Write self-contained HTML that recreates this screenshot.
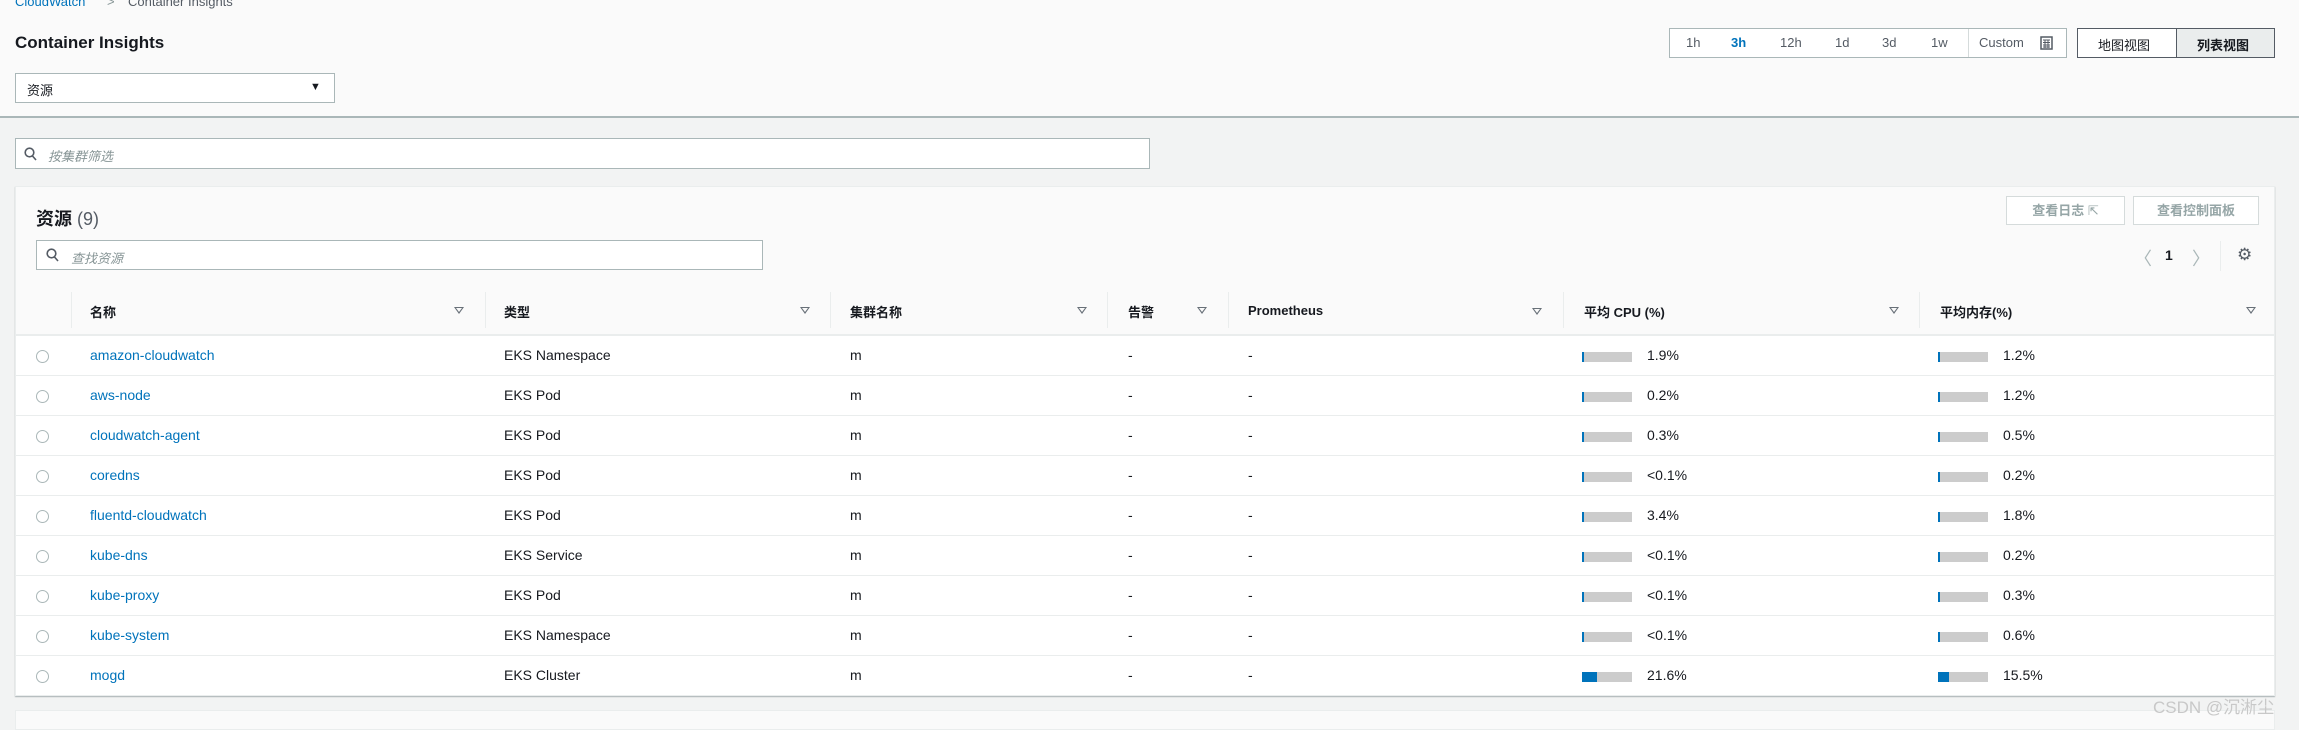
<!DOCTYPE html>
<html><head><meta charset="utf-8"><style>
*{box-sizing:border-box;margin:0;padding:0}
body{width:2299px;height:722px;overflow:hidden;background:#f2f3f3;font-family:"Liberation Sans","Noto Sans CJK SC",sans-serif;font-size:14px;color:#16191f;position:relative}
.a{position:absolute;white-space:nowrap}
.top{position:absolute;left:0;top:0;width:2299px;height:118px;background:#fafafa;border-bottom:2px solid #aab7b8}
.inp{position:absolute;background:#fff;border:1px solid #aab7b8}
.ph{color:#879596;font-style:italic}
.panel{position:absolute;left:15px;top:186px;width:2260px;height:510px;background:#fff;border:1px solid #eaeded;box-shadow:0 1px 1px rgba(0,28,36,.3)}
.phead{position:absolute;left:0;top:0;width:100%;height:148px;background:#fafafa;border-bottom:1px solid #eaeded}
.row{position:absolute;left:0;width:100%;height:40px;border-top:1px solid #eaeded}
.rad{position:absolute;width:13px;height:13px;border:1px solid #aab7b8;border-radius:50%}
.lnk{color:#0073bb}
.bar{position:absolute;width:50px;height:10px;background:#cccccc}
.bar i{position:absolute;left:0;top:0;height:10px;background:#0073bb}
.tri{position:absolute;width:0;height:0;border-left:5px solid transparent;border-right:5px solid transparent;border-top:7px solid #687078}
.tri::after{content:"";position:absolute;left:-3px;top:-6px;border-left:3px solid transparent;border-right:3px solid transparent;border-top:4px solid #fafafa}
.div{position:absolute;width:1px;background:#eaeded}
.btn{position:absolute;border:1px solid #d5dbdb;background:#fff;color:#95a5a6;font-weight:bold;font-size:13px;text-align:center;line-height:27px}
</style></head><body>
<div class="top"></div>
<div class="a lnk" style="left:15px;top:-6px;font-size:13px">CloudWatch</div>
<div class="a" style="left:107px;top:-6px;font-size:13px;color:#879596">&gt;</div>
<div class="a" style="left:128px;top:-6px;font-size:13px;color:#545b64">Container Insights</div>
<div class="a" style="left:15px;top:33px;font-size:17px;font-weight:bold">Container Insights</div>
<div class="inp" style="left:15px;top:73px;width:320px;height:30px"><span class="a" style="left:11px;top:6px;font-size:13px">资源</span><span class="a" style="left:294px;top:7px;font-size:11px;color:#16191f">▼</span></div>

<div class="inp" style="left:1669px;top:28px;width:398px;height:30px;border-color:#aab7b8"></div>
<div class="a" style="left:1686px;top:35px;font-size:13px;color:#545b64">1h</div>
<div class="a" style="left:1731px;top:35px;font-size:13px;color:#0073bb;font-weight:bold">3h</div>
<div class="a" style="left:1780px;top:35px;font-size:13px;color:#545b64">12h</div>
<div class="a" style="left:1835px;top:35px;font-size:13px;color:#545b64">1d</div>
<div class="a" style="left:1882px;top:35px;font-size:13px;color:#545b64">3d</div>
<div class="a" style="left:1931px;top:35px;font-size:13px;color:#545b64">1w</div>
<div class="div" style="left:1968px;top:29px;height:28px;background:#d5dbdb"></div>
<div class="a" style="left:1979px;top:35px;font-size:13px;color:#545b64">Custom</div>
<svg class="a" style="left:2040px;top:36px" width="13" height="14" viewBox="0 0 13 14"><rect x="1" y="1" width="11" height="12" fill="none" stroke="#545b64" stroke-width="1.5"/><path d="M3 4h7M3 6.5h7M3 9h7M3 11h7M5 4v8M8 4v8" stroke="#545b64" stroke-width="1"/></svg>
<div class="a" style="left:2077px;top:28px;width:198px;height:30px;border:1px solid #545b64;background:#fff"></div>
<div class="a" style="left:2176px;top:29px;width:98px;height:28px;background:#eaeded;border-left:1px solid #545b64"></div>
<div class="a" style="left:2098px;top:35px;font-size:13px">地图视图</div>
<div class="a" style="left:2197px;top:35px;font-size:13px;font-weight:bold">列表视图</div>

<div class="inp" style="left:15px;top:138px;width:1135px;height:31px"><svg class="a" style="left:8px;top:8px" width="13" height="14"><circle cx="5.5" cy="5.5" r="4.3" fill="none" stroke="#545b64" stroke-width="1.6"/><path d="M8.5 9l3.5 4" stroke="#545b64" stroke-width="1.6"/></svg><span class="a ph" style="left:32px;top:7px;font-size:13px">按集群筛选</span></div>

<div class="panel">
<div class="phead"></div>
<div class="a" style="left:20px;top:18px;font-size:18px;font-weight:bold">资源 <span style="font-weight:normal;color:#545b64">(9)</span></div>
<div class="inp" style="left:20px;top:53px;width:727px;height:30px"><svg class="a" style="left:9px;top:7px" width="13" height="14"><circle cx="5.5" cy="5.5" r="4.3" fill="none" stroke="#545b64" stroke-width="1.6"/><path d="M8.5 9l3.5 4" stroke="#545b64" stroke-width="1.6"/></svg><span class="a ph" style="left:34px;top:7px;font-size:13px">查找资源</span></div>
<div class="btn" style="left:1990px;top:9px;width:119px;height:29px">查看日志 <span style="font-weight:normal">⇱</span></div>
<div class="btn" style="left:2117px;top:9px;width:126px;height:29px">查看控制面板</div>
<div class="a" style="left:2118px;top:58px;font-size:18px;color:#aab7b8">〈</div>
<div class="a" style="left:2149px;top:60px;font-size:14px;font-weight:bold">1</div>
<div class="a" style="left:2176px;top:58px;font-size:18px;color:#aab7b8">〉</div>
<div class="div" style="left:2204px;top:54px;height:30px"></div>
<div class="a" style="left:2221px;top:58px;font-size:17px;color:#545b64">⚙</div>

<div class="div" style="left:55px;top:105px;height:36px"></div>
<div class="div" style="left:469px;top:105px;height:36px"></div>
<div class="div" style="left:814px;top:105px;height:36px"></div>
<div class="div" style="left:1091px;top:105px;height:36px"></div>
<div class="div" style="left:1212px;top:105px;height:36px"></div>
<div class="div" style="left:1547px;top:105px;height:36px"></div>
<div class="div" style="left:1903px;top:105px;height:36px"></div>
<div class="a" style="left:74px;top:115px;font-weight:bold;font-size:13px">名称</div>
<div class="a" style="left:488px;top:115px;font-weight:bold;font-size:13px">类型</div>
<div class="a" style="left:834px;top:115px;font-weight:bold;font-size:13px">集群名称</div>
<div class="a" style="left:1112px;top:115px;font-weight:bold;font-size:13px">告警</div>
<div class="a" style="left:1232px;top:116px;font-weight:bold;font-size:13px">Prometheus</div>
<div class="a" style="left:1568px;top:115px;font-weight:bold;font-size:13px">平均 CPU (%)</div>
<div class="a" style="left:1924px;top:115px;font-weight:bold;font-size:13px">平均内存(%)</div>
<div class="tri" style="left:438px;top:120px"></div>
<div class="tri" style="left:784px;top:120px"></div>
<div class="tri" style="left:1061px;top:120px"></div>
<div class="tri" style="left:1181px;top:120px"></div>
<div class="tri" style="left:1516px;top:121px"></div>
<div class="tri" style="left:1873px;top:120px"></div>
<div class="tri" style="left:2230px;top:120px"></div>

<div id="rows"></div>
</div>
<div class="a" style="left:15px;top:710px;width:2260px;height:20px;background:#fafafa;border:1px solid #eaeded"></div>
<div class="a" style="left:2153px;top:693px;font-size:17px;color:#c8c8c8">CSDN @沉淅尘</div>
<script>
var d=[["amazon-cloudwatch","EKS Namespace",1.9,"1.9%",1.2,"1.2%"],["aws-node","EKS Pod",0.2,"0.2%",1.2,"1.2%"],["cloudwatch-agent","EKS Pod",0.3,"0.3%",0.5,"0.5%"],["coredns","EKS Pod",0.1,"<0.1%",0.2,"0.2%"],["fluentd-cloudwatch","EKS Pod",3.4,"3.4%",1.8,"1.8%"],["kube-dns","EKS Service",0.1,"<0.1%",0.2,"0.2%"],["kube-proxy","EKS Pod",0.1,"<0.1%",0.3,"0.3%"],["kube-system","EKS Namespace",0.1,"<0.1%",0.6,"0.6%"],["mogd","EKS Cluster",21.6,"21.6%",15.5,"15.5%"]];
var h="";d.forEach(function(r,i){var t=148+i*40;
var w1=Math.max(2,Math.round(r[2]/100*50*1.4)),w2=Math.max(2,Math.round(r[4]/100*50*1.4));
h+='<div class="row" style="top:'+t+'px"><div class="rad" style="left:20px;top:14px"></div><span class="a lnk" style="left:74px;top:11px">'+r[0]+'</span><span class="a" style="left:488px;top:11px">'+r[1]+'</span><span class="a" style="left:834px;top:11px">m</span><span class="a" style="left:1112px;top:11px">-</span><span class="a" style="left:1232px;top:11px">-</span><div class="bar" style="left:1566px;top:16px"><i style="width:'+w1+'px"></i></div><span class="a" style="left:1631px;top:11px">'+r[3]+'</span><div class="bar" style="left:1922px;top:16px"><i style="width:'+w2+'px"></i></div><span class="a" style="left:1987px;top:11px">'+r[5]+'</span></div>';});
document.getElementById("rows").innerHTML=h;
</script>
</body></html>
